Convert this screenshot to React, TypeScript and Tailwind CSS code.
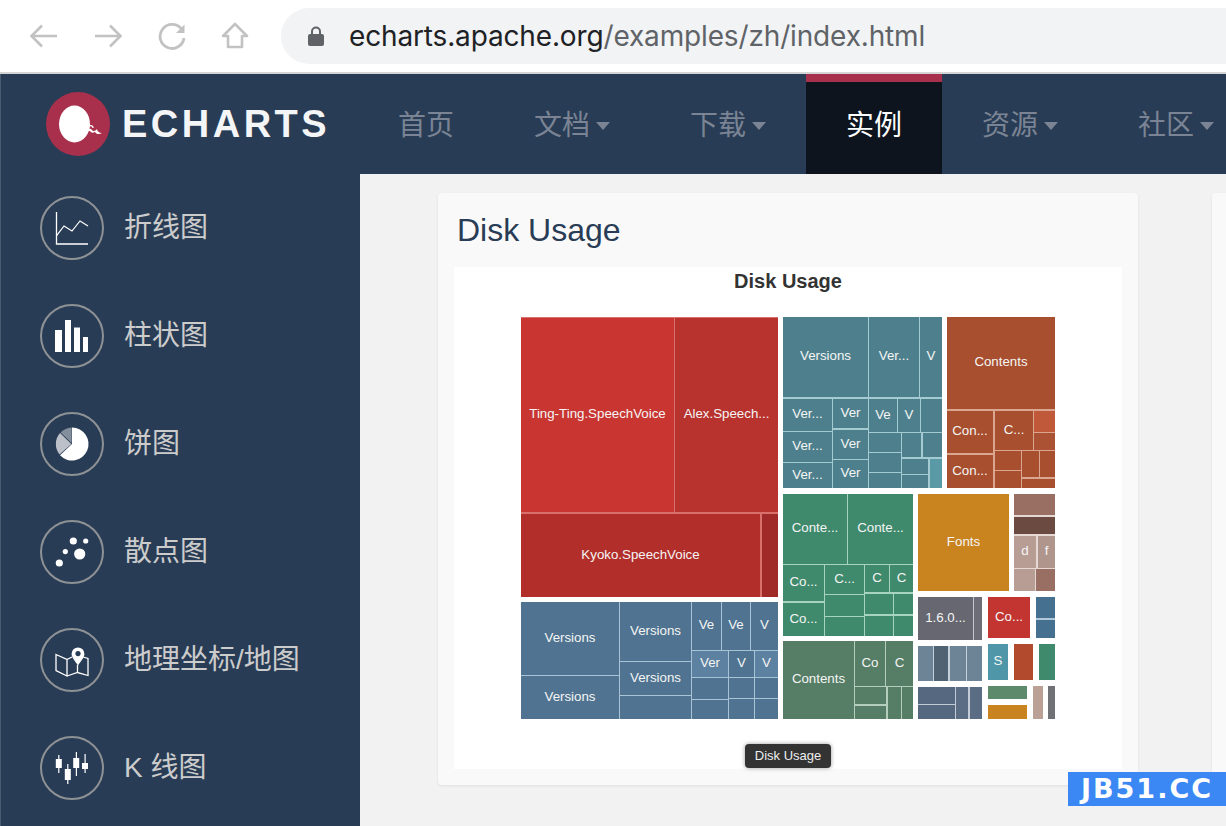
import React from 'react';

type Tile = [number, number, number, number, string, string?];

interface TileGroup {
  box: [number, number, number, number];
  tint: string;
  tiles: Tile[];
}

const RED = '#c93632';
const BLUE = '#4f7390';
const TEAL = '#4d808c';
const RUST = '#a84f2f';
const GREEN = '#3f8a6c';
const MOSS = '#567e66';

const groups: TileGroup[] = [
  {
    box: [521, 317, 778, 597],
    tint: '#d9706c',
    tiles: [
      [521, 318, 674, 512, RED, 'Ting-Ting.SpeechVoice'],
      [675, 318, 778, 512, '#b8322e', 'Alex.Speech...'],
      [521, 514, 760, 597, '#b22e2a', 'Kyoko.SpeechVoice'],
      [762, 514, 778, 597, '#9f2a27'],
    ],
  },
  {
    box: [521, 602, 778, 719],
    tint: '#a9c3d6',
    tiles: [
      [521, 602, 619, 675, BLUE, 'Versions'],
      [521, 676, 619, 719, BLUE, 'Versions'],
      [620, 602, 691, 661, BLUE, 'Versions'],
      [620, 662, 691, 695, BLUE, 'Versions'],
      [620, 696, 691, 719, BLUE],
      [692, 602, 721, 650, BLUE, 'Ve'],
      [722, 602, 750, 650, BLUE, 'Ve'],
      [751, 602, 778, 650, BLUE, 'V'],
      [692, 651, 728, 677, '#5d81a0', 'Ver'],
      [729, 651, 754, 677, BLUE, 'V'],
      [755, 651, 778, 677, '#5d81a0', 'V'],
      [692, 678, 728, 699, BLUE],
      [729, 678, 754, 698, BLUE],
      [755, 678, 778, 698, BLUE],
      [692, 700, 728, 719, BLUE],
      [729, 699, 754, 719, BLUE],
      [755, 699, 778, 719, BLUE],
    ],
  },
  {
    box: [783, 317, 942, 488],
    tint: '#a5cbd2',
    tiles: [
      [783, 317, 868, 397, TEAL, 'Versions'],
      [869, 317, 919, 397, TEAL, 'Ver...'],
      [920, 317, 942, 397, TEAL, 'V'],
      [783, 399, 832, 431, TEAL, 'Ver...'],
      [783, 432, 832, 462, TEAL, 'Ver...'],
      [783, 463, 832, 488, TEAL, 'Ver...'],
      [833, 399, 868, 428, TEAL, 'Ver'],
      [833, 430, 868, 459, TEAL, 'Ver'],
      [833, 460, 868, 488, TEAL, 'Ver'],
      [869, 399, 897, 432, TEAL, 'Ve'],
      [898, 399, 920, 432, TEAL, 'V'],
      [921, 399, 942, 432, TEAL],
      [869, 433, 901, 452, TEAL],
      [902, 433, 921, 457, TEAL],
      [923, 433, 942, 457, TEAL],
      [869, 453, 901, 472, TEAL],
      [869, 473, 901, 488, TEAL],
      [902, 459, 928, 474, TEAL],
      [902, 475, 928, 488, TEAL],
      [930, 459, 942, 488, '#5a9aa7'],
    ],
  },
  {
    box: [947, 317, 1055, 488],
    tint: '#dba68f',
    tiles: [
      [947, 317, 1055, 409, RUST, 'Contents'],
      [947, 411, 993, 453, RUST, 'Con...'],
      [947, 455, 993, 488, RUST, 'Con...'],
      [995, 411, 1033, 450, RUST, 'C...'],
      [1034, 411, 1055, 432, '#c0593a'],
      [1034, 433, 1055, 450, '#aa5233'],
      [995, 451, 1021, 470, RUST],
      [995, 471, 1021, 488, RUST],
      [1022, 451, 1039, 477, RUST],
      [1040, 451, 1055, 477, RUST],
      [1022, 479, 1055, 488, RUST],
    ],
  },
  {
    box: [783, 494, 913, 636],
    tint: '#a6d4bf',
    tiles: [
      [783, 494, 847, 564, GREEN, 'Conte...'],
      [848, 494, 913, 564, GREEN, 'Conte...'],
      [783, 565, 824, 601, GREEN, 'Co...'],
      [783, 603, 824, 636, GREEN, 'Co...'],
      [825, 565, 864, 594, GREEN, 'C...'],
      [825, 595, 864, 616, GREEN],
      [825, 617, 864, 636, GREEN],
      [865, 565, 889, 592, GREEN, 'C'],
      [890, 565, 913, 592, GREEN, 'C'],
      [865, 594, 893, 614, GREEN],
      [865, 616, 893, 636, GREEN],
      [894, 594, 913, 614, GREEN],
      [894, 616, 913, 636, GREEN],
    ],
  },
  {
    box: [783, 641, 913, 719],
    tint: '#b5cdbd',
    tiles: [
      [783, 641, 854, 719, MOSS, 'Contents'],
      [855, 641, 885, 686, MOSS, 'Co'],
      [886, 641, 913, 686, MOSS, 'C'],
      [855, 687, 886, 704, MOSS],
      [855, 706, 886, 719, MOSS],
      [888, 687, 901, 719, MOSS],
      [902, 687, 913, 719, MOSS],
    ],
  },
  { box: [918, 494, 1009, 591], tint: '#c98420', tiles: [[918, 494, 1009, 591, '#c98420', 'Fonts']] },
  {
    box: [1014, 494, 1055, 591],
    tint: '#e6d8d3',
    tiles: [
      [1014, 494, 1055, 515, '#9a6f63'],
      [1014, 517, 1055, 534, '#6b4a42'],
      [1014, 536, 1036, 568, '#b89d95', 'd'],
      [1038, 536, 1055, 568, '#b0958d', 'f'],
      [1014, 569, 1035, 591, '#b89d95'],
      [1036, 569, 1055, 591, '#9a6f63'],
    ],
  },
  {
    box: [918, 597, 982, 640],
    tint: '#c5c6cc',
    tiles: [
      [918, 597, 973, 640, '#666770', '1.6.0...'],
      [974, 597, 982, 640, '#6c6d76'],
    ],
  },
  { box: [988, 597, 1030, 638], tint: '#c23531', tiles: [[988, 597, 1030, 638, '#c23531', 'Co...']] },
  {
    box: [1036, 597, 1055, 638],
    tint: '#b3c9da',
    tiles: [
      [1036, 597, 1055, 618, '#46708f'],
      [1036, 620, 1055, 638, '#46708f'],
    ],
  },
  {
    box: [918, 646, 982, 681],
    tint: '#c4d0da',
    tiles: [
      [918, 646, 933, 681, '#6d8396'],
      [934, 646, 948, 681, '#4f6373'],
      [950, 646, 966, 681, '#6d8396'],
      [967, 646, 982, 681, '#6d8396'],
    ],
  },
  { box: [988, 644, 1008, 680], tint: '#4f97a8', tiles: [[988, 644, 1008, 680, '#4f97a8', 'S']] },
  { box: [1014, 644, 1033, 680], tint: '#b24a2d', tiles: [[1014, 644, 1033, 680, '#b24a2d']] },
  { box: [1039, 644, 1055, 680], tint: '#3f8a6c', tiles: [[1039, 644, 1055, 680, '#3f8a6c']] },
  {
    box: [918, 687, 982, 719],
    tint: '#c3cbd6',
    tiles: [
      [918, 687, 955, 704, '#566880'],
      [918, 705, 955, 719, '#566880'],
      [956, 687, 968, 719, '#5a6d84'],
      [970, 687, 982, 719, '#5a6d84'],
    ],
  },
  { box: [988, 686, 1027, 699], tint: '#5e8a6c', tiles: [[988, 686, 1027, 699, '#5e8a6c']] },
  { box: [988, 705, 1027, 719], tint: '#c98420', tiles: [[988, 705, 1027, 719, '#c98420']] },
  { box: [1033, 686, 1043, 719], tint: '#bba096', tiles: [[1033, 686, 1043, 719, '#bba096']] },
  { box: [1048, 686, 1055, 719], tint: '#707175', tiles: [[1048, 686, 1055, 719, '#707175']] },
];

const Treemap = () => (
  <svg viewBox="454 267 668 502" className="block w-full h-full">
    {groups.map((group, g) => (
      <g key={g}>
        <rect
          x={group.box[0]}
          y={group.box[1]}
          width={group.box[2] - group.box[0]}
          height={group.box[3] - group.box[1]}
          fill={group.tint}
        />
        {group.tiles.map(([x0, y0, x1, y1, fill, label], t) => (
          <g key={t}>
            <rect x={x0} y={y0} width={x1 - x0} height={y1 - y0} fill={fill} />
            {label && (
              <text
                x={(x0 + x1) / 2}
                y={(y0 + y1) / 2 + 3}
                textAnchor="middle"
                fontSize="13.3"
                fill="#f5f5f5"
                fontFamily="'Liberation Sans', sans-serif"
              >
                {label}
              </text>
            )}
          </g>
        ))}
      </g>
    ))}
  </svg>
);

const iconClass = 'block w-16 h-16 rounded-full border-2 border-[#8f9295] shrink-0';

// every sidebar icon is drawn on the same 64x64 grid as its ring
const ChartIcon = ({ children }: { children: React.ReactNode }) => (
  <div className={iconClass}>
    <svg viewBox="2 2 60 60" className="block w-[60px] h-[60px]">
      {children}
    </svg>
  </div>
);

const LineIcon = () => (
  <ChartIcon>
    <path d="M16.5 16v32H48" fill="none" stroke="#fff" strokeWidth="1.3" />
    <path d="M16.6 39.6 24 30l8 5 8-10 8 5" fill="none" stroke="#fff" strokeWidth="1.2" />
  </ChartIcon>
);

const BarIcon = () => (
  <ChartIcon>
    <rect x="15" y="26" width="7" height="22" fill="#fff" />
    <rect x="25" y="16" width="6" height="32" fill="#fff" />
    <rect x="34" y="23.5" width="6" height="24.5" fill="#fff" />
    <rect x="43" y="33" width="5" height="15" fill="#fff" />
  </ChartIcon>
);

const PieIcon = () => (
  <ChartIcon>
    <path d="M32 32V15.5A16.5 16.5 0 1 1 20 43.3Z" fill="#fff" />
    <path d="M31.4 32 19.6 42.4A16.5 16.5 0 0 1 20 21Z" fill="#bcc1c9" />
    <path d="M31.6 31 20.6 20.5A16.5 16.5 0 0 1 31.6 15.5Z" fill="#848e9c" />
  </ChartIcon>
);

const ScatterIcon = () => (
  <ChartIcon>
    <circle cx="19.3" cy="43" r="3.6" fill="#fff" />
    <circle cx="25.3" cy="31.6" r="2.6" fill="#fff" />
    <circle cx="33.3" cy="21" r="3.6" fill="#fff" />
    <circle cx="39.7" cy="34" r="5.6" fill="#fff" />
    <circle cx="45.7" cy="21" r="2.6" fill="#fff" />
  </ChartIcon>
);

const MapIcon = () => (
  <ChartIcon>
    <path
      d="M16 26.5 27 31.5V48L16 42.5ZM27 31.5 32 29M27 48 37.5 44.5 48 47.5V30.5L43 29M37.5 37V44.5"
      fill="none"
      stroke="#fff"
      strokeWidth="1.3"
    />
    <path d="M38 37.5C35 33 31.6 29.5 31.6 25.8a6.4 6.4 0 0 1 12.8 0C44.4 29.5 41 33 38 37.5Z" fill="#fff" />
    <circle cx="38" cy="25.6" r="2.6" fill="#293c55" />
  </ChartIcon>
);

const CandleIcon = () => (
  <ChartIcon>
    <g fill="#fff">
      <rect x="18.2" y="19" width="1.2" height="18" />
      <rect x="15.8" y="23" width="6" height="9" />
      <rect x="27.2" y="28" width="1.2" height="20" />
      <rect x="24.8" y="33" width="6" height="11" />
      <rect x="35.8" y="16" width="1.2" height="24" />
      <rect x="33.2" y="22" width="6" height="10" />
      <rect x="44.5" y="18" width="1.2" height="19" />
      <rect x="42" y="27" width="6" height="6" />
    </g>
  </ChartIcon>
);

const sideItems = [
  { label: '折线图', icon: <LineIcon /> },
  { label: '柱状图', icon: <BarIcon /> },
  { label: '饼图', icon: <PieIcon /> },
  { label: '散点图', icon: <ScatterIcon /> },
  { label: '地理坐标/地图', icon: <MapIcon /> },
  { label: 'K 线图', icon: <CandleIcon /> },
];

const navItems = [
  { label: '首页' },
  { label: '文档', caret: true },
  { label: '下载', caret: true },
  { label: '实例', active: true },
  { label: '资源', caret: true },
  { label: '社区', caret: true },
];

const BrowserBar = () => (
  <div className="h-[74px] shrink-0 bg-white border-b-2 border-[#d4d6d6] flex items-center pl-[28px]">
    <div className="flex items-center gap-[32px] text-[#c2c2c2]">
      <svg width="32" height="28" viewBox="0 0 32 28" fill="none" stroke="currentColor" strokeWidth="2.6">
        <path d="M29 14H4M14 3.5 3.5 14 14 24.5" />
      </svg>
      <svg width="32" height="28" viewBox="0 0 32 28" fill="none" stroke="currentColor" strokeWidth="2.6">
        <path d="M3 14H28M18 3.5 28.5 14 18 24.5" />
      </svg>
      <svg width="32" height="28" viewBox="0 0 32 28" fill="none" stroke="currentColor" strokeWidth="2.8">
        <path d="M25.5 7A12 12 0 1 0 28 16" />
        <path d="M28.5 2.5V11H20Z" fill="currentColor" stroke="none" />
      </svg>
      <svg width="32" height="28" viewBox="0 0 32 28" fill="none" stroke="currentColor" strokeWidth="2.6">
        <path d="M15 2 3 14h5v11h14V14h5Z" strokeLinejoin="round" />
      </svg>
    </div>
    <div className="ml-[29px] flex-1 h-14 rounded-l-full bg-[#f1f3f4] flex items-center pl-[27px] font-['Inter',sans-serif] text-[28px] tracking-[-0.15px]">
      <svg width="16" height="20" viewBox="0 0 16 20" className="shrink-0 text-[#5f6368]">
        <path d="M4 9V5.5a4 4 0 0 1 8 0V9" fill="none" stroke="currentColor" strokeWidth="2" />
        <rect x="0" y="8" width="16" height="12" rx="2" fill="currentColor" />
      </svg>
      <span className="ml-[25px] text-[#202124]">echarts.apache.org</span>
      <span className="text-[#5f6368]">/examples/zh/index.html</span>
    </div>
  </div>
);

const TopNav = () => (
  <div className="h-[100px] shrink-0 flex bg-[#293c55] border-l border-[#4c5c70]">
    <div className="w-[357px] shrink-0 flex items-center pl-[45px]">
      <svg width="64" height="64" viewBox="0 0 64 64" className="shrink-0">
        <circle cx="32" cy="32" r="32" fill="#a8304c" />
        <ellipse cx="28.5" cy="32" rx="15.5" ry="18.5" fill="#fff" />
        <path d="M41 38c2-2 4-1 5 0s2 2 4 0l1-1c0 2 2 4 5 4-3 2-6 1-7-1-2 1-4 1-5-1-1 0-2 0-3-1Z" fill="#fff" />
        <path d="M43 34c2-1 4 0 4 2" fill="none" stroke="#fff" strokeWidth="1.4" />
      </svg>
      <span className="ml-3 text-[38px] leading-none font-bold tracking-[3.5px] text-[#f4f5f6] font-['Liberation_Sans',sans-serif]">
        ECHARTS
      </span>
    </div>
    {navItems.map((item) => (
      <div
        key={item.label}
        className={
          item.active
            ? 'relative shrink-0 flex items-center px-10 pt-1 bg-[#0e141e] text-white'
            : 'relative shrink-0 flex items-center px-10 pt-1 text-[#7a8494]'
        }
      >
        {item.active && <div className="absolute top-0 left-0 right-0 h-2 bg-[#a8304c]" />}
        <span className="text-[28px] leading-none whitespace-nowrap font-['Liberation_Sans','Noto_Sans_CJK_SC',sans-serif]">
          {item.label}
        </span>
        {item.caret && (
          <span className="ml-[6px] w-0 h-0 border-x-[7.5px] border-t-[8px] border-x-transparent border-t-[#7a8494]" />
        )}
      </div>
    ))}
  </div>
);

const Sidebar = () => (
  <div className="w-[360px] shrink-0 bg-[#293c55] border-l border-[#4c5c70] pt-[22px] pl-[39px] flex flex-col gap-[44px]">
    {sideItems.map((item) => (
      <div key={item.label} className="flex items-center gap-[20px] h-16">
        {item.icon}
        <span className="text-[28px] leading-none whitespace-nowrap text-[#cccccc] font-['Liberation_Sans','Noto_Sans_CJK_SC',sans-serif]">
          {item.label}
        </span>
      </div>
    ))}
  </div>
);

const ExampleCard = () => (
  <div className="w-[700px] h-[592px] shrink-0 bg-[#f9f9f9] rounded shadow-[0_1px_3px_rgba(0,0,0,0.08)] px-4">
    <h2 className="h-[74px] pt-[17px] pl-[3px] text-[32px] leading-10 text-[#293c55] font-['Liberation_Sans',sans-serif]">
      Disk Usage
    </h2>
    <div className="relative h-[502px] bg-white">
      <div className="absolute top-0 left-0 right-0 text-center text-[20px] leading-7 font-bold text-[#333333] font-['Liberation_Sans',sans-serif]">
        Disk Usage
      </div>
      <Treemap />
      <div className="absolute left-[291px] top-[477px] w-[86px] h-6 bg-[#333333] rounded-sm shadow-[0_0_4px_rgba(0,0,0,0.4)] flex items-center justify-center text-[13px] text-[#eeeeee] font-['Liberation_Sans',sans-serif]">
        Disk Usage
      </div>
    </div>
  </div>
);

export default function App() {
  return (
    <div className="relative w-[1226px] h-[826px] overflow-hidden flex flex-col bg-[#f2f2f2]">
      <BrowserBar />
      <TopNav />
      <div className="flex flex-1 min-h-0">
        <Sidebar />
        <div className="flex-1 min-w-0 flex items-start gap-[74px] pl-[78px] pt-[19px] overflow-hidden">
          <ExampleCard />
          <div className="w-[300px] h-[592px] shrink-0 bg-[#f9f9f9] rounded shadow-[0_1px_3px_rgba(0,0,0,0.08)]" />
        </div>
      </div>
      <div className="absolute left-[1068px] top-[772px] w-[158px] h-[34px] bg-[#3b88f5] flex items-center justify-center text-white text-[27px] font-bold tracking-[2px] font-['DejaVu_Sans',sans-serif]">
        JB51.CC
      </div>
    </div>
  );
}
